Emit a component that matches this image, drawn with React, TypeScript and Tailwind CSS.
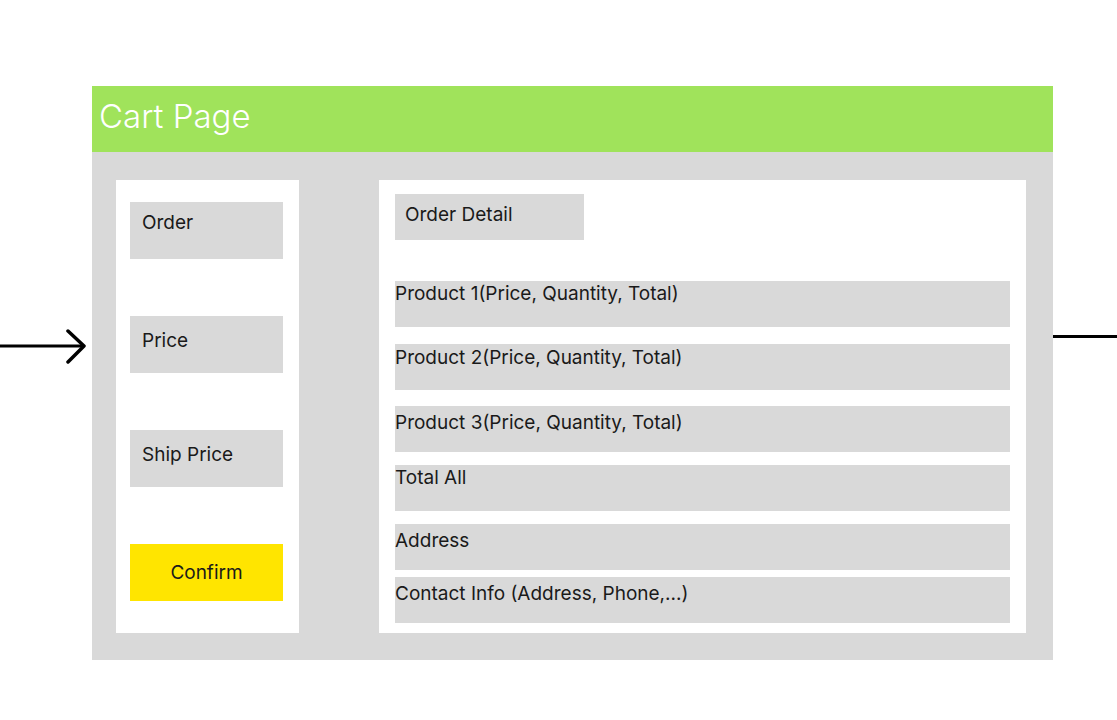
import { ReactNode } from 'react'

const font = { fontFamily: 'Inter, "Noto Sans", sans-serif' }

function SideItem({ label, className = '' }: { label: string; className?: string }) {
  return (
    <div
      className={`h-[57px] w-[153px] bg-[#d9d9d9] pl-[12px] text-[19px] leading-[22px] text-[#1a1a1a] ${className}`}
    >
      {label}
    </div>
  )
}

function Row({ children, className = '' }: { children: ReactNode; className?: string }) {
  return (
    <div className={`h-[46px] w-full bg-[#d9d9d9] text-[19px] leading-[22px] text-[#1a1a1a] ${className}`}>
      {children}
    </div>
  )
}

export default function App() {
  return (
    <div className="h-[720px] w-[1117px] bg-white" style={font}>
      <div className="flex items-start pt-[86px]">
        {/* incoming arrow */}
        <div className="w-[92px] pt-[243px]">
          <svg width="92" height="36" viewBox="0 0 92 36" fill="none">
            <path d="M0 17H84" stroke="#000" strokeWidth="3" />
            <path
              d="M68 2L84 17L68 33"
              stroke="#000"
              strokeWidth="3.5"
              strokeLinecap="round"
              strokeLinejoin="round"
            />
          </svg>
        </div>

        <div className="flex h-[574px] w-[961px] flex-col">
          <div className="flex h-[66px] items-center bg-[#a0e35b] pb-[4px] pl-[7px] text-[33px] font-light text-white">
            Cart Page
          </div>

          <div className="flex flex-1 bg-[#d9d9d9] pl-[24px] pt-[28px]">
            {/* left column */}
            <div className="flex h-[453px] w-[183px] flex-col gap-[57px] bg-white pl-[14px] pt-[22px]">
              <SideItem label="Order" className="pt-[10px]" />
              <SideItem label="Price" className="pt-[14px]" />
              <SideItem label="Ship Price" className="pt-[14px]" />
              <div className="flex h-[57px] w-[153px] items-center justify-center bg-[#ffe500] pt-[2px] text-[19px] text-[#1a1a1a]">
                Confirm
              </div>
            </div>

            {/* right column */}
            <div className="ml-[80px] flex h-[453px] w-[647px] flex-col bg-white px-[16px] pt-[14px]">
              <div className="h-[46px] w-[189px] bg-[#d9d9d9] pl-[10px] pt-[10px] text-[19px] leading-[22px] text-[#1a1a1a]">
                Order Detail
              </div>
              <Row className="mt-[41px] pt-[2px]">Product 1(Price, Quantity, Total)</Row>
              <Row className="mt-[17px] pt-[3px]">Product 2(Price, Quantity, Total)</Row>
              <Row className="mt-[16px] pt-[6px]">Product 3(Price, Quantity, Total)</Row>
              <Row className="mt-[13px] pt-[2px]">Total All</Row>
              <Row className="mt-[13px] pt-[6px]">Address</Row>
              <Row className="mt-[7px] pt-[6px]">Contact Info (Address, Phone,...)</Row>
            </div>
          </div>
        </div>

        {/* outgoing line */}
        <div className="flex-1 pt-[249px]">
          <div className="h-[3px] w-full bg-black" />
        </div>
      </div>
    </div>
  )
}
